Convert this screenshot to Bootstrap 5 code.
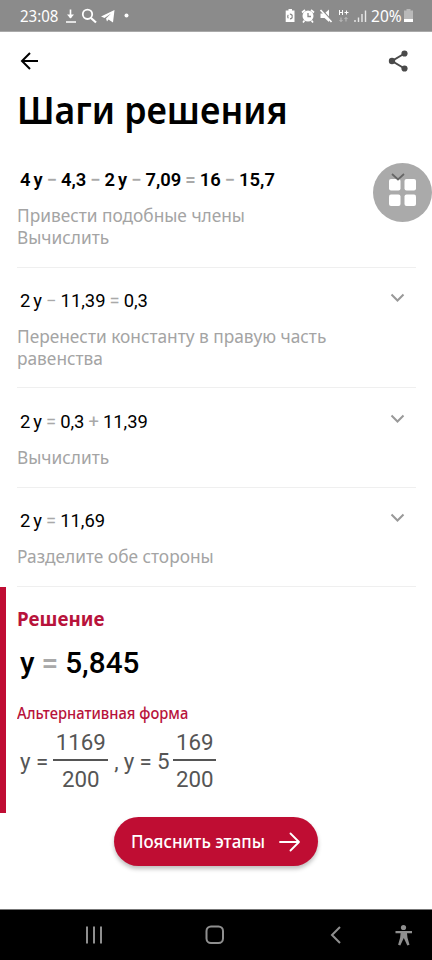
<!DOCTYPE html>
<html lang="ru">
<head>
<meta charset="utf-8">
<meta name="viewport" content="width=device-width, initial-scale=1">
<title>Шаги решения</title>
<link href="https://cdn.jsdelivr.net/npm/bootstrap@5.3.0/dist/css/bootstrap.min.css" rel="stylesheet">
<style>
body{font-family:"Noto Sans",sans-serif;background:#fff;color:#000}
.screen{width:432px;height:960px;overflow:hidden}
svg{display:block;flex:none}
.narrow{display:block;white-space:nowrap;transform:scaleX(.94);transform-origin:0 50%}
.status{height:32px;background:#8b8b8b;color:#fff;border-bottom:1px solid #a9a9a9;padding:0 19px 0 20px}
.clock{font-size:16px;width:38px;margin-right:7px}
.pct{font-size:16px;width:30px;margin:0 3px 0 4px;transform:scaleX(.97)}
.topbar{height:57px;padding:0 24px 0 20px}
.heading{font-size:38.5px;line-height:40px;font-weight:600;margin:0 0 0 17px;height:72px;transform:scaleX(.925)}
.step{margin:0 16px 0 17px;border-bottom:1px solid #efefef}
.eq{font-family:Roboto,sans-serif;font-size:18.4px;line-height:22px;padding-left:3px;column-gap:4px;white-space:nowrap;height:36px}
.eq i{font-style:normal;color:#a9a9a9}
.eq em{font-style:normal;margin-left:3px}
.note{font-size:18.4px;line-height:21.7px;color:#a4a4a4}
.s1{height:107px;padding-top:8px}
.s1 .eq{font-weight:600;height:35px}
.s2{height:120px;padding-top:22px}
.s2 .eq,.s3 .eq{height:35px}
.s3{height:100px;padding-top:23px}
.s4{height:99px;padding-top:22px}
.s4 .eq{height:35px}
.chev{margin:3px 11px 0 0}
.result{height:226px;border-left:6px solid #bf0d33;padding:18px 0 0 11px}
.crimson{color:#b8133b}
.solved{font-size:20px;line-height:28px;font-weight:700}
.answer{font-family:Roboto,sans-serif;font-size:29.7px;font-weight:500;line-height:36px;column-gap:7px;padding:12px 0 0 3px}
.answer i{font-style:normal;color:#a9a9a9}
.alt-title{font-size:16px;line-height:24px;font-weight:500;margin-top:20px;transform:scaleX(.92)}
.alt{font-family:Roboto,sans-serif;font-size:22.3px;color:#555;line-height:34px;padding:2px 0 0 3px}
.frac{text-align:center}
.frac span{display:block;height:34px;line-height:36px}
.frac span:first-child{border-bottom:2px solid #555;height:34px;line-height:31px}
.frac-a{width:55px;margin-left:5px}
.frac-b{width:43px;margin-left:4px}
.alt-next{margin-left:6px;letter-spacing:-.2px}
.pill{width:204px;height:49px;background:#bf0d33;color:#fff;box-shadow:0 3px 4px rgba(0,0,0,.25);padding:0 18px 0 17px;margin:4px 0 0 114px}
.pill .narrow{font-size:18px;font-weight:500;width:134px}
.navkeys{height:51px;background:#000;border-top:1px solid #777}
.float-btn{width:59px;height:59px;left:373px;top:163px}
</style>
<script src="https://cdn.jsdelivr.net/npm/bootstrap@5.3.0/dist/js/bootstrap.bundle.min.js"></script>
</head>
<body>
<div class="screen position-relative d-flex flex-column">
  <header class="status d-flex align-items-center flex-shrink-0">
    <span class="clock narrow">23:08</span>
    <svg width="64" height="16" viewBox="0 0 64 16" fill="none" stroke="#fff" stroke-width="1.8"><path d="M5.500 1.500V10M1 14h10" stroke-width="1.600"/><path d="M2 6.500h7L5.500 10.500Z" fill="#fff" stroke="none"/><circle cx="42.500" cy="6.300" r="4.700" transform="translate(-20)"/><path d="M26 10l5 4.500" stroke-width="2.200"/><path d="M36 8.500 49.500 2 48 14.500 43.500 11.500 42 13.500 41 10.500 46 5.500 39.500 10Z" fill="#fff" stroke="none"/><circle cx="61.500" cy="7.500" r="2" fill="#fff" stroke="none"/></svg>
    <svg class="ms-auto" width="82" height="16" viewBox="0 0 82 16" fill="#fff"><path d="M3.500 1h3.500v1.500H9.500V14H.7V2.500h2.800Z"/><circle cx="5" cy="8.500" r="2.300" fill="none" stroke="#8b8b8b" stroke-width="1.200" stroke-dasharray="3.300 1.500"/><circle cx="23" cy="8" r="5.500"/><path d="M17 4.500 20 2M29 4.500 26 2M19.500 12.500l-1.500 2M26.500 12.500l1.500 2" stroke="#fff" stroke-width="1.700"/><path d="M23 5v3.500h3" fill="none" stroke="#8b8b8b" stroke-width="1.300"/><path d="M35.500 5.500H39.500l4.500-4v12.500l-4.500-4h-4Z"/><path d="M37 2l11 12" stroke="#8b8b8b" stroke-width="1.600"/><path d="M35.500 2l11 12" stroke="#fff" stroke-width="1.700"/><path d="M54.500 2v5M57.500 2v5M54.500 4.500h3M59.500 4.500h4M61.500 2.500v4" stroke="#fff" stroke-width="1"/><path d="M56 9.500v4M54.500 12 56 13.500 57.500 12M61 13.500v-4M59.500 11 61 9.500 62.500 11" fill="none" stroke="#c4c4c4" stroke-width=".9"/><path d="M70 14v-2M73.500 14V9.500M77 14V6M80.500 14V2.500" stroke="#e8e8e8" stroke-width="1.400"/></svg>
    <span class="pct narrow">20%</span>
    <svg width="9" height="14" viewBox="0 0 9 14"><path d="M2.500 0h4v1.500H9V13H0V1.500h2.500Z" fill="#b9b9b9"/><path d="M0 10h9v3H0Z" fill="#fff"/></svg>
  </header>
  <div class="topbar d-flex align-items-center justify-content-between flex-shrink-0">
    <svg width="18" height="18" viewBox="0 0 18 18" fill="none" stroke="#000" stroke-width="2"><path d="M18 9H2M10 1 2 9l8 8"/></svg>
    <svg width="20" height="22" viewBox="0 0 20 22" fill="#4a4a4a"><path d="M16.500 3.500 4 11l12.500 7.500" fill="none" stroke="#4a4a4a" stroke-width="2"/><circle cx="16.500" cy="3.500" r="3.100"/><circle cx="4" cy="11" r="3.200"/><circle cx="16.500" cy="18.500" r="3.100"/></svg>
  </div>
  <h1 class="heading narrow flex-shrink-0">Шаги решения</h1>
  <section class="step s1 flex-shrink-0">
    <div class="d-flex justify-content-between align-items-start"><div class="eq d-flex"><span>4<em>y</em></span><i>−</i><span>4,3</span><i>−</i><span>2<em>y</em></span><i>−</i><span>7,09</span><i>=</i><span>16</span><i>−</i><span>15,7</span></div>
    <svg class="chev" width="15" height="10" viewBox="0 0 15 10" fill="none" stroke="#999" stroke-width="2"><path d="M1.500 1.500l6 6 6-6"/></svg></div>
    <div class="note"><span class="narrow">Привести подобные члены</span><span class="narrow">Вычислить</span></div>
  </section>
  <section class="step s2 flex-shrink-0">
    <div class="d-flex justify-content-between align-items-start"><div class="eq d-flex"><span>2<em>y</em></span><i>−</i><span>11,39</span><i>=</i><span>0,3</span></div>
    <svg class="chev" width="15" height="10" viewBox="0 0 15 10" fill="none" stroke="#999" stroke-width="2"><path d="M1.500 1.500l6 6 6-6"/></svg></div>
    <div class="note"><span class="narrow">Перенести константу в правую часть</span><span class="narrow">равенства</span></div>
  </section>
  <section class="step s3 flex-shrink-0">
    <div class="d-flex justify-content-between align-items-start"><div class="eq d-flex"><span>2<em>y</em></span><i>=</i><span>0,3</span><i>+</i><span>11,39</span></div>
    <svg class="chev" width="15" height="10" viewBox="0 0 15 10" fill="none" stroke="#999" stroke-width="2"><path d="M1.500 1.500l6 6 6-6"/></svg></div>
    <div class="note"><span class="narrow">Вычислить</span></div>
  </section>
  <section class="step s4 flex-shrink-0">
    <div class="d-flex justify-content-between align-items-start"><div class="eq d-flex"><span>2<em>y</em></span><i>=</i><span>11,69</span></div>
    <svg class="chev" width="15" height="10" viewBox="0 0 15 10" fill="none" stroke="#999" stroke-width="2"><path d="M1.500 1.500l6 6 6-6"/></svg></div>
    <div class="note"><span class="narrow">Разделите обе стороны</span></div>
  </section>
  <section class="result flex-shrink-0">
    <div class="solved crimson narrow">Решение</div>
    <div class="answer d-flex"><span>y</span><i>=</i><span>5,845</span></div>
    <div class="alt-title crimson narrow">Альтернативная форма</div>
    <div class="alt d-flex align-items-center"><span>y =</span><div class="frac frac-a"><span>1169</span><span>200</span></div><span class="alt-next">, y = 5</span><div class="frac frac-b"><span>169</span><span>200</span></div></div>
  </section>
  <button type="button" class="pill btn rounded-pill border-0 d-flex align-items-center flex-shrink-0"><span class="narrow text-start">Пояснить этапы</span>
    <svg class="ms-auto" width="21" height="20" viewBox="0 0 21 20" fill="none" stroke="#fff" stroke-width="1.800" stroke-linecap="round" stroke-linejoin="round"><path d="M1 10h19M11.500 1.500 20 10l-8.500 8.500"/></svg></button>
  <footer class="navkeys mt-auto flex-shrink-0">
    <svg width="432" height="50" viewBox="0 0 432 50" fill="none" stroke="#8f8f8f" stroke-width="2"><path d="M87 16.500v17M94 16.500v17M101 16.500v17"/><rect x="206.500" y="16.500" width="16.500" height="16.500" rx="4.500"/><path d="M340 17l-8 8 8 8"/><g fill="#8f8f8f" stroke="none"><circle cx="403.500" cy="17.500" r="2.600"/><path d="M395.500 21h16.500v2.200h-5l.5 4.500 2 7-2.200.8-3.500-7.500-3.500 7.500-2.200-.8 2-7 .5-4.500H395.500Z"/></g></svg>
  </footer>
  <div class="float-btn position-absolute">
    <svg width="59" height="59" viewBox="0 0 59 59"><circle cx="29.500" cy="29.500" r="29.500" fill="#aaa"/><g fill="#fff"><rect x="16" y="16" width="11.500" height="11.500" rx="2"/><rect x="31.500" y="16" width="11.500" height="11.500" rx="2"/><rect x="16" y="31.500" width="11.500" height="11.500" rx="2"/><rect x="31.500" y="31.500" width="11.500" height="11.500" rx="2"/></g><path d="M19 11l6 5.500 6-5.500" fill="none" stroke="#666" stroke-width="1.700"/></svg>
  </div>
</div>
</body>
</html>
